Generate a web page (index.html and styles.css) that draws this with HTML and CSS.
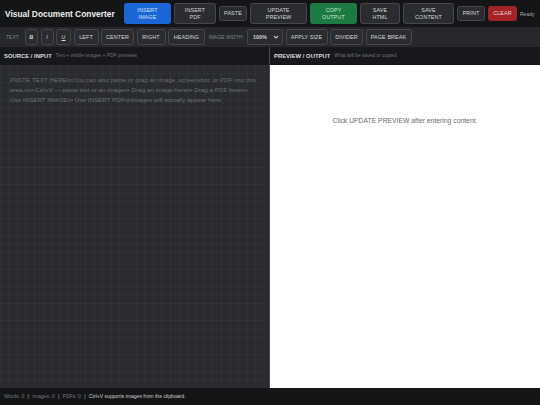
FILE: index.html
```html
<!DOCTYPE html>
<html lang="en">
<head>
  <meta charset="UTF-8">
  <title>Visual Document Converter</title>
  <link rel="stylesheet" href="styles.css">
</head>
<body>
  <div class="app">
    <!-- Top bar -->
    <header class="topbar">
      <div class="app-title">Visual Document Converter</div>
      <div class="topbar-actions">
        <button class="btn btn-blue w-47">INSERT<br>IMAGE</button>
        <button class="btn w-42">INSERT<br>PDF</button>
        <button class="btn w-28 short">PASTE</button>
        <button class="btn w-57">UPDATE<br>PREVIEW</button>
        <button class="btn btn-green w-47">COPY<br>OUTPUT</button>
        <button class="btn w-40">SAVE<br>HTML</button>
        <button class="btn w-51">SAVE<br>CONTENT</button>
        <button class="btn w-28 short">PRINT</button>
        <button class="btn btn-red w-29 short">CLEAR</button>
        <span class="status">Ready</span>
      </div>
    </header>
    <!-- Format toolbar -->
    <div class="toolbar">
      <span class="tool-label text-label">TEXT:</span>
      <button class="btn tool w-13 bold">B</button>
      <button class="btn tool w-13 italic">I</button>
      <button class="btn tool w-15 under">U</button>
      <button class="btn tool w-25">LEFT</button>
      <button class="btn tool w-33">CENTER</button>
      <button class="btn tool w-29">RIGHT</button>
      <button class="btn tool w-37">HEADING</button>
      <span class="tool-label width-label">IMAGE WIDTH:</span>
      <div class="select-box">
        <span>100%</span>
        <svg width="6" height="4" viewBox="0 0 6 4"><path d="M0.8 0.8 L3 3 L5.2 0.8" fill="none" stroke="#ccc" stroke-width="1.1"/></svg>
      </div>
      <button class="btn tool w-42">APPLY SIZE</button>
      <button class="btn tool w-33">DIVIDER</button>
      <button class="btn tool w-46">PAGE BREAK</button>
    </div>
    <!-- Editor panes -->
    <main class="panes">
      <section class="pane pane-source">
        <div class="pane-head">
          <span class="pane-title">SOURCE / INPUT</span>
          <span class="pane-note">Text + visible images + PDF previews</span>
        </div>
        <div class="source-body">PASTE TEXT HEREnnYou can also paste or drag an image, screenshot, or PDF into this area.nn• Ctrl+V — paste text or an imagen• Drag an image heren• Drag a PDF heren• Use INSERT IMAGEn• Use INSERT PDFnnImages will actually appear here.</div>
      </section>
      <section class="pane pane-preview">
        <div class="pane-head">
          <span class="pane-title">PREVIEW / OUTPUT</span>
          <span class="pane-note">What will be saved or copied</span>
        </div>
        <div class="preview-body">Click UPDATE PREVIEW after entering content.</div>
      </section>
    </main>
    <footer class="statusbar">
      <span>Words: 0</span><i>|</i>
      <span>Images: 0</span><i>|</i>
      <span>PDFs: 0</span><i>|</i>
      <span class="tip">Ctrl+V supports images from the clipboard.</span>
    </footer>
  </div>
</body>
</html>
```

FILE: styles.css
```css
* {
  box-sizing: border-box;
}
html, body {
  margin: 0;
  height: 100%;
  overflow: hidden;
}
body {
  background: #141517;
  font-family: "Liberation Sans", Arial, sans-serif;
  color: #e0e0e0;
}
.app {
  height: 405px;
  display: flex;
  flex-direction: column;
}
.topbar {
  height: 27px;
  background: #141517;
  display: flex;
  align-items: center;
  padding-left: 5px;
  flex: none;
}
.app-title {
  width: 119px;
  font-size: 8.4px;
  font-weight: 700;
  color: #eee;
  white-space: nowrap;
}
.topbar-actions {
  display: flex;
  align-items: center;
  gap: 3px;
}
.btn {
  height: 21px;
  padding: 0;
  border: 1px solid #45474b;
  border-radius: 2.5px;
  background: #2a2c30;
  color: #d8d8d8;
  font-family: inherit;
  font-size: 5.4px;
  line-height: 6.5px;
  letter-spacing: 0.1px;
  text-align: center;
}
.btn.short {
  height: 15px;
}
.btn-blue {
  background: #1a66d6;
  border-color: #1a66d6;
  color: #cfe0f8;
}
.btn-green {
  background: #1d7a43;
  border-color: #1d7a43;
  color: #cfe6d7;
}
.btn-red {
  background: #a32226;
  border-color: #a32226;
  color: #efd2d3;
}
.status {
  font-size: 5px;
  color: #a8aaad;
}
.w-13 { width: 13px; }
.w-15 { width: 15px; }
.w-25 { width: 25px; }
.w-28 { width: 28px; }
.w-29 { width: 29px; }
.w-33 { width: 33px; }
.w-37 { width: 37px; }
.w-40 { width: 40px; }
.w-42 { width: 42px; }
.w-46 { width: 46px; }
.w-47 { width: 47px; }
.w-51 { width: 51px; }
.w-57 { width: 57px; }
.toolbar {
  height: 20px;
  background: #26282b;
  display: flex;
  align-items: center;
  gap: 2.5px;
  padding-left: 6px;
  flex: none;
}
.btn.tool {
  height: 16px;
}
.bold { font-weight: 700; }
.italic { font-style: italic; }
.under { text-decoration: underline; }
.tool-label {
  font-size: 5px;
  color: #7f8286;
}
.text-label {
  width: 16.5px;
}
.width-label {
  width: 36px;
  margin-left: 1px;
  white-space: nowrap;
}
.select-box {
  width: 36px;
  height: 16px;
  padding: 0 3px 0 5px;
  border: 1px solid #45474b;
  border-radius: 2.5px;
  background: #2a2c30;
  font-size: 5.4px;
  font-weight: 700;
  color: #d0d0d0;
  display: flex;
  align-items: center;
  justify-content: space-between;
}
.panes {
  flex: 1;
  min-height: 0;
  display: flex;
}
.pane {
  width: 270px;
  display: flex;
  flex-direction: column;
}
.pane-source {
  border-right: 1px solid #4a4c50;
}
.pane-head {
  height: 17.5px;
  flex: none;
  background: #17181b;
  display: flex;
  align-items: center;
  gap: 4px;
  padding-left: 4px;
}
.pane-title {
  font-size: 5.9px;
  font-weight: 700;
  color: #dedede;
}
.pane-note {
  font-size: 4.9px;
  color: #6f7175;
}
.source-body {
  flex: 1;
  padding: 10px;
  background-color: #292b2f;
  background-image:
    linear-gradient(rgba(255,255,255,0.03) 1px, transparent 1px),
    linear-gradient(90deg, rgba(255,255,255,0.03) 1px, transparent 1px);
  background-size: 8.5px 8.5px;
  font-size: 6.25px;
  line-height: 10px;
  color: #6a6d71;
}
.preview-body {
  flex: 1;
  background: #fff;
  padding-top: 52px;
  text-align: center;
  font-size: 6.8px;
  color: #6b6b6b;
}
.statusbar {
  height: 17.5px;
  flex: none;
  background: #141517;
  display: flex;
  align-items: center;
  gap: 3.3px;
  padding-left: 4px;
  font-size: 5.1px;
  color: #77797d;
}
.statusbar i {
  font-style: normal;
  color: #bbb;
}
.tip {
  color: #cfcfcf;
}
```
